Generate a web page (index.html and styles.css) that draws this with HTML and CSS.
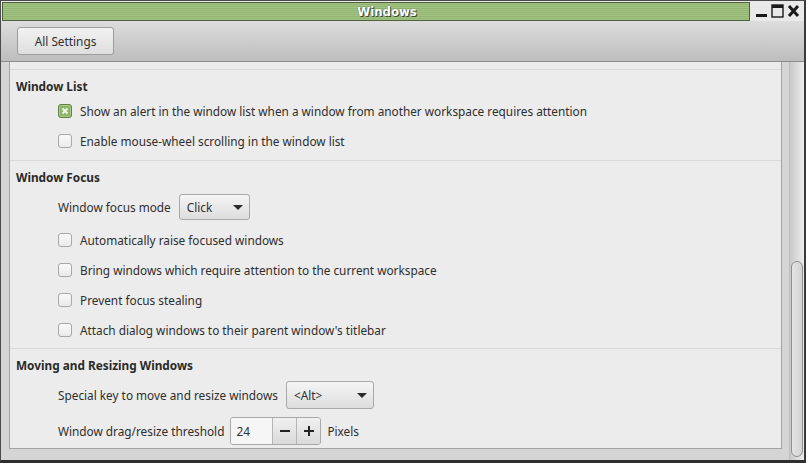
FILE: index.html
```html
<!DOCTYPE html>
<html lang="en">
<head>
    <meta charset="UTF-8">
    <title>Windows</title>
    <link rel="stylesheet" href="styles.css">
</head>
<body>
    <div class="window">
        <div class="titlebar">
            <div class="title">Windows</div>
            <div class="wm-buttons">
                <svg width="12" height="14" viewBox="0 0 12 14"><rect x="0" y="10" width="11" height="3" fill="#1a1a1a"/></svg>
                <svg width="13" height="14" viewBox="0 0 13 14"><rect x="1" y="1" width="11" height="12" fill="none" stroke="#1a1a1a" stroke-width="1.4"/><rect x="1" y="1" width="11" height="3" fill="#1a1a1a"/></svg>
                <svg width="13" height="14" viewBox="0 0 13 14"><path d="M2 2 L11 12 M11 2 L2 12" stroke="#1a1a1a" stroke-width="3"/></svg>
            </div>
        </div>
        <div class="toolbar">
            <button class="btn">All Settings</button>
        </div>
        <div class="main">
            <div class="panel">
                <div class="scrolled-gap"></div>

                <div class="section first">
                    <div class="section-title">Window List</div>
                    <div class="row">
                        <span class="check checked"><svg width="8" height="8" viewBox="0 0 8 8"><path d="M1.5 1.5 L6.5 6.5 M6.5 1.5 L1.5 6.5" stroke="#f4f8ee" stroke-width="1.8"/></svg></span>
                        <label>Show an alert in the window list when a window from another workspace requires attention</label>
                    </div>
                    <div class="row">
                        <span class="check"></span>
                        <label>Enable mouse-wheel scrolling in the window list</label>
                    </div>
                </div>

                <div class="section">
                    <div class="section-title">Window Focus</div>
                    <div class="row tall">
                        <label>Window focus mode</label>
                        <div class="combo focus-mode"><span>Click</span><i class="arrow"></i></div>
                    </div>
                    <div class="row">
                        <span class="check"></span>
                        <label>Automatically raise focused windows</label>
                    </div>
                    <div class="row">
                        <span class="check"></span>
                        <label>Bring windows which require attention to the current workspace</label>
                    </div>
                    <div class="row">
                        <span class="check"></span>
                        <label>Prevent focus stealing</label>
                    </div>
                    <div class="row">
                        <span class="check"></span>
                        <label>Attach dialog windows to their parent window's titlebar</label>
                    </div>
                </div>

                <div class="section">
                    <div class="section-title">Moving and Resizing Windows</div>
                    <div class="row tall">
                        <label>Special key to move and resize windows</label>
                        <div class="combo mod-key"><span>&lt;Alt&gt;</span><i class="arrow"></i></div>
                    </div>
                    <div class="row spin-row">
                        <label>Window drag/resize threshold</label>
                        <div class="spin">
                            <span class="spin-value">24</span>
                            <span class="spin-btn"><svg width="10" height="10" viewBox="0 0 10 10"><path d="M0 5 H10" stroke="#222" stroke-width="2"/></svg></span>
                            <span class="spin-btn"><svg width="10" height="10" viewBox="0 0 10 10"><path d="M0 5 H10 M5 0 V10" stroke="#222" stroke-width="2"/></svg></span>
                        </div>
                        <label>Pixels</label>
                    </div>
                </div>
            </div>
            <div class="scrollbar">
                <div class="thumb"></div>
            </div>
        </div>
    </div>
</body>
</html>
```

FILE: styles.css
```css
html, body {
    margin: 0;
    padding: 0;
}
body {
    width: 806px;
    height: 463px;
    background: #2b2b2b;
    font-family: "Noto Sans", sans-serif;
    font-size: 11.8px;
    color: #2e2e2e;
}
.window {
    box-sizing: border-box;
    width: 806px;
    height: 463px;
    border: 1px solid #4a4a4a;
    border-bottom: 3px solid #2e2e2e;
    border-right: 2px solid #3a3a3a;
    background: #d5d5d5;
    display: flex;
    flex-direction: column;
}
.titlebar {
    height: 20px;
    display: flex;
    align-items: center;
    background: #e9e9e9;
    padding-left: 1px;
}
.title {
    box-sizing: border-box;
    width: 748px;
    height: 19px;
    margin-top: 1px;
    padding-left: 22px;
    border: 1px solid #4e5f3e;
    background: repeating-linear-gradient(to bottom, #a3c383 0px, #a3c383 1px, #93b573 1px, #93b573 2px);
    text-align: center;
    font-family: "DejaVu Sans Condensed", "DejaVu Sans", sans-serif;
    font-stretch: condensed;
    font-weight: bold;
    font-size: 13px;
    line-height: 17px;
    color: #ffffff;
    text-shadow: 1px 1px 0 #3d4a30, 0 0 1px #3d4a30;
}
.wm-buttons {
    display: flex;
    align-items: center;
    gap: 3px;
    margin-left: 6px;
}
.toolbar {
    height: 41px;
    box-sizing: border-box;
    background: linear-gradient(to bottom, #dddddd, #bdbdbd);
    border-bottom: 1px solid #8c8c8c;
    padding: 6px 0 0 16px;
}
.btn {
    width: 97px;
    height: 28px;
    border: 1px solid #9d9d9d;
    border-radius: 3px;
    background: linear-gradient(to bottom, #f2f2f2, #dedede);
    font-family: "Noto Sans", sans-serif;
    font-size: 11.8px;
    color: #2f2f2f;
    padding: 0;
}
.main {
    flex: 1;
    display: flex;
    min-height: 0;
}
.panel {
    box-sizing: border-box;
    width: 773px;
    margin-left: 8px;
    height: 387px;
    background: #ececec;
    border: 1px solid #a4a4a4;
    border-top: none;
}
.scrolled-gap {
    height: 7px;
}
.section {
    border-top: 1px solid #d9d9d9;
    padding-bottom: 3px;
}
.section.first {
    padding-bottom: 4px;
}
.section-title {
    font-weight: bold;
    line-height: 16px;
    padding: 8px 0 2px 6px;
    color: #2a2a2a;
}
.row {
    height: 30px;
    display: flex;
    align-items: center;
    gap: 8px;
    padding-left: 48px;
}
.row.tall {
    height: 36px;
    padding-top: 2px;
}
.row.spin-row {
    height: 35px;
    gap: 6px;
}
.check {
    box-sizing: border-box;
    width: 14px;
    height: 14px;
    border: 1px solid #a8a8a8;
    border-radius: 3px;
    background: linear-gradient(to bottom, #fafafa, #eaeaea);
    display: flex;
    align-items: center;
    justify-content: center;
}
.check.checked {
    border-color: #5f7f45;
    background: #8db56a;
    box-shadow: inset 0 0 0 1px #a9cc88;
}
.combo {
    box-sizing: border-box;
    display: flex;
    align-items: center;
    justify-content: space-between;
    border: 1px solid #a9a9a9;
    border-radius: 3px;
    background: linear-gradient(to bottom, #f5f5f5, #dddddd);
    padding: 0 6px 0 7px;
    color: #2f2f2f;
}
.focus-mode {
    width: 71px;
    height: 26px;
}
.mod-key {
    width: 88px;
    height: 28px;
}
.arrow {
    width: 0;
    height: 0;
    border-left: 5px solid transparent;
    border-right: 5px solid transparent;
    border-top: 5px solid #2a2a2a;
}
.spin {
    display: flex;
    height: 28px;
    box-sizing: border-box;
    border: 1px solid #a9a9a9;
    border-radius: 3px;
    overflow: hidden;
}
.spin-value {
    width: 41px;
    background: #f6f6f6;
    padding-left: 5px;
    box-sizing: border-box;
    line-height: 26px;
    color: #2f2f2f;
}
.spin-btn {
    width: 23px;
    border-left: 1px solid #b5b5b5;
    background: linear-gradient(to bottom, #f0f0f0, #dadada);
    display: flex;
    align-items: center;
    justify-content: center;
}
.scrollbar {
    width: 14px;
    margin-left: 7px;
    background: linear-gradient(to right, #c9c9c9, #ececec);
    border-left: 1px solid #bdbdbd;
    position: relative;
}
.thumb {
    position: absolute;
    left: 1px;
    right: 1px;
    top: 199px;
    height: 196px;
    border: 1px solid #8f8f8f;
    border-radius: 6px;
    background: linear-gradient(to right, #e4e4e4, #d3d3d3);
    box-sizing: border-box;
}
```
